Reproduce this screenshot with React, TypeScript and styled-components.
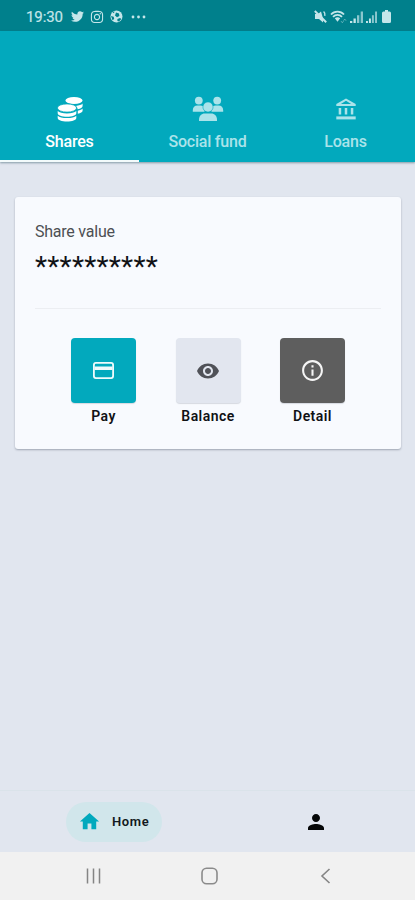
import React from "react";
import styled, { createGlobalStyle } from "styled-components";
import { FaTwitter, FaInstagram } from "react-icons/fa";
import { MdHome, MdPerson, MdRemoveRedEye, MdInfoOutline } from "react-icons/md";

const GlobalStyle = createGlobalStyle`
  * { box-sizing: border-box; }
  body { margin: 0; background: #e1e6ef; font-family: Roboto, sans-serif; }
  button { font-family: inherit; border: 0; padding: 0; background: none; }
  svg { display: block; flex: none; }
`;

const Screen = styled.div`
  width: 415px;
  height: 900px;
  display: flex;
  flex-direction: column;
  overflow: hidden;
  background: #e1e6ef;
`;

const StatusBar = styled.header`
  height: 31px;
  flex: none;
  display: flex;
  align-items: center;
  justify-content: space-between;
  padding: 2px 24px 0 26px;
  background: #00808c;
  color: #c5e6ea;
`;

const StatusGroup = styled.div<{ $gap: number }>`
  display: flex;
  align-items: center;
  gap: ${(p) => p.$gap}px;
`;

const Clock = styled.span`
  width: 39px;
  font-size: 15px;
  line-height: 18px;
  letter-spacing: -0.1px;
  -webkit-text-stroke: 0.2px currentColor;
`;

const Overflow = styled.span`
  margin-left: 2px;
`;

const BatteryLevel = styled.span`
  margin-left: 2px;
`;

const Tabs = styled.nav`
  height: 131px;
  flex: none;
  display: grid;
  grid-template-columns: 139px 137px 139px;
  background: #02a9bd;
  box-shadow: 0 1px 2px rgba(40, 80, 95, 0.5);
`;

const Tab = styled.button<{ $active?: boolean }>`
  display: flex;
  flex-direction: column;
  align-items: center;
  justify-content: flex-end;
  padding-bottom: ${(p) => (p.$active ? 8 : 10)}px;
  border-bottom: ${(p) => (p.$active ? "2px solid #f3fbfc" : "0")};
  color: ${(p) => (p.$active ? "#ffffff" : "#abe3ea")};
`;

const TabIcon = styled.span`
  height: 28px;
  margin-bottom: 9px;
  display: flex;
  align-items: center;
  justify-content: center;
`;

const TabLabel = styled.span<{ $spacing: number }>`
  font-size: 16px;
  line-height: 20px;
  font-weight: 500;
  letter-spacing: ${(p) => p.$spacing}px;
  white-space: nowrap;
`;

const Content = styled.main`
  flex: 1;
  padding: 35px 14px 0 15px;
`;

const Card = styled.section`
  height: 252px;
  padding: 25px 20px 0;
  border-radius: 3px;
  background: #f8fafe;
  box-shadow: 0 1px 2px rgba(60, 70, 90, 0.4);
`;

const CardLabel = styled.div`
  font-size: 16px;
  line-height: 20px;
  letter-spacing: -0.23px;
  color: #4d4f53;
`;

const MaskedValue = styled.div`
  height: 67px;
  padding-top: 9px;
  font-size: 28px;
  line-height: 32px;
  letter-spacing: 0.24px;
  color: #101216;
  border-bottom: 1px solid #eceef2;
`;

const Actions = styled.div`
  display: flex;
  justify-content: space-between;
  padding: 29px 36px 0;
`;

const Action = styled.div`
  width: 65px;
  display: flex;
  flex-direction: column;
  align-items: center;
`;

const Tile = styled.button<{ $bg: string; $color: string }>`
  width: 65px;
  height: 65px;
  display: flex;
  align-items: center;
  justify-content: center;
  border-radius: 4px;
  background: ${(p) => p.$bg};
  color: ${(p) => p.$color};
  box-shadow: 0 1px 1px rgba(60, 70, 90, 0.18);
`;

const ActionLabel = styled.span`
  margin-top: 4px;
  font-size: 14px;
  line-height: 18px;
  font-weight: 600;
  letter-spacing: 0.45px;
  color: #101115;
`;

const BottomNav = styled.nav`
  height: 62px;
  flex: none;
  display: flex;
  align-items: center;
  padding-left: 66px;
  border-top: 1px solid #dae3ea;
`;

const HomePill = styled.button`
  width: 96px;
  height: 40px;
  display: flex;
  align-items: center;
  gap: 11px;
  padding-left: 12px;
  border-radius: 20px;
  background: #d1e6eb;
  color: #02a9bd;
`;

const PillLabel = styled.span`
  font-size: 13px;
  font-weight: 600;
  letter-spacing: 0.6px;
  color: #111820;
`;

const ProfileButton = styled.button`
  margin-left: 142px;
  color: #050708;
`;

const SystemBar = styled.footer`
  height: 48px;
  flex: none;
  display: flex;
  align-items: center;
  gap: 99px;
  padding-left: 85px;
  background: #f1f1f1;
`;

const Ball = () => (
  <svg width="13" height="13" viewBox="0 0 13 13" fill="currentColor">
    <circle cx="6.500" cy="6.500" r="6" />
    <path d="M6 2.600 9 3.400 9.400 6 7 7.200 5 5.400zM1 6 3.700 6.700 4.200 9 2.500 10.300zM7.400 9 10 8l1.400 1L9 11.400 7.400 11zM2.500 2.500 4.500 1.200 4 3.300z" fill="#00808c" />
  </svg>
);

const Dots = () => (
  <svg width="15" height="4" viewBox="0 0 15 4" fill="currentColor">
    <circle cx="2" cy="2" r="1.400" /><circle cx="7.500" cy="2" r="1.400" /><circle cx="13" cy="2" r="1.400" />
  </svg>
);

const Muted = () => (
  <svg width="13" height="13" viewBox="0 0 13 13" fill="currentColor">
    <path d="M1 4h3l3-2.500 2 7V12.600L5 9H1z" />
    <path d="M.8 1 12.200 12.200" fill="none" stroke="currentColor" strokeWidth="2" />
    <path d="M9.600 1.500c1.200 1 1.600 2.600 1.200 4.300" fill="none" stroke="currentColor" strokeWidth="1.400" />
  </svg>
);

const Wifi = () => (
  <svg width="17" height="14" viewBox="0 0 17 14" fill="none" stroke="currentColor">
    <path d="M1 4.500C4.500.700 10.500.700 14 4.500M3 6.800c2.500-2.600 6.500-2.600 9 0" strokeWidth="1.800" />
    <path d="M4.800 8.300 7.500 11.800l2.700-3.500c-1.500-1.400-3.900-1.400-5.400 0z" fill="currentColor" stroke="none" />
    <path d="m11 11 1.300 1.800 1.300-1.800M13.500 10.800 14.800 9l1.300 1.800" strokeWidth=".8" opacity=".5" />
  </svg>
);

const Signal = ({ width }: { width: number }) => (
  <svg width={width} height="12" viewBox="0 0 13 12" preserveAspectRatio="none" fill="currentColor">
    <path d="M0 10h2.300v2H0zM3.500 7.500h2.300V12H3.500z" />
    <path d="M7 4.200h2.300V12H7zM10.700.500H13V12h-2.300z" opacity=".7" />
  </svg>
);

const Battery = () => (
  <svg width="9" height="13" viewBox="0 0 9 13" fill="currentColor">
    <path d="M3 0h3v1.500h1.500Q9 1.500 9 3v8.500Q9 13 7.500 13h-6Q0 13 0 11.500V3q0-1.500 1.500-1.500H3z" />
  </svg>
);

const Coins = () => (
  <svg width="26" height="26" viewBox="0 0 26 26" fill="currentColor">
    <ellipse cx="17" cy="4.500" rx="8.600" ry="3.500" />
    <path d="M18.800 9.900c3.200-.2 5.700-1 6.800-2.300v2.500c0 1.500-2 2.700-4.900 3.200-.100-1.300-.7-2.500-1.900-3.400zM20.800 14.700c2.300-.4 4-1.200 4.800-2.200v2.300c0 1.400-2 2.500-4.800 3z" />
    <ellipse cx="10" cy="12" rx="9.600" ry="4.100" stroke="#02a9bd" strokeWidth=".8" />
    <path d="M.7 15c1.500 1.600 5 2.500 9.300 2.500s7.800-.9 9.300-2.500v2.300c0 2-4.100 3.500-9.300 3.500S.7 19.300.7 17.300zM.7 19.800c1.500 1.500 5 2.300 9.300 2.300s7.800-.8 9.300-2.300V22c0 2-4.100 3.500-9.300 3.500S.7 24 .7 22z" />
  </svg>
);

const People = () => (
  <svg width="32" height="26" viewBox="0 0 32 26" fill="currentColor">
    <circle cx="6.800" cy="4.600" r="3.900" /><circle cx="25.200" cy="4.600" r="3.900" />
    <path d="M.8 15.800v-1.500c0-2.900 1.800-4.800 4.600-4.800h3c1.900 0 3.400.8 4.100 2.300v4zM31.200 15.800v-1.500c0-2.900-1.800-4.800-4.600-4.800h-3c-1.900 0-3.400.8-4.100 2.300v4z" />
    <circle cx="16" cy="11" r="5.100" stroke="#02a9bd" strokeWidth=".6" />
    <path d="M7 25.100v-1.500c0-3.800 2.400-6.200 5.800-6.200h6.400c3.400 0 5.800 2.400 5.800 6.200v1.500z" />
  </svg>
);

const Bank = () => (
  <svg width="20" height="22" viewBox="0 0 20 22" fill="currentColor">
    <path fillRule="evenodd" d="M10 .5 19.700 6v2H.3V6zM10 2.800 4.900 5.900h10.200z" />
    <path d="M2.700 9.900h2.500v6.700H2.700zM8.750 9.900h2.500v6.700h-2.500zM14.800 9.900h2.500v6.700h-2.500z" />
    <path d="M.3 18.400h19.400v3H.3z" />
  </svg>
);

const CardGlyph = () => (
  <svg width="21" height="17" viewBox="0 0 21 17">
    <rect x=".9" y=".9" width="19.200" height="15.200" rx="2" fill="none" stroke="currentColor" strokeWidth="1.800" />
    <path d="M1.500 4.500h18V8h-18z" fill="currentColor" />
  </svg>
);

const RecentsIcon = () => (
  <svg width="17" height="16" viewBox="0 0 17 16" fill="none" stroke="#858585" strokeWidth="1.500">
    <path d="M2.500.5v15M8.500.5v15M14.500.5v15" />
  </svg>
);

const SystemHomeIcon = () => (
  <svg width="17" height="18" viewBox="0 0 17 18" fill="none" stroke="#8b8b8b" strokeWidth="1.600">
    <rect x="1" y="1.200" width="15" height="15.600" rx="4.600" />
  </svg>
);

const BackIcon = () => (
  <svg width="17" height="16" viewBox="0 0 17 16" fill="none" stroke="#858585" strokeWidth="1.600">
    <path d="M12.500 1 5 8l7.500 7" />
  </svg>
);

export default function App() {
  return (
    <>
      <GlobalStyle />
      <Screen>
        <StatusBar>
          <StatusGroup $gap={6}>
            <Clock>19:30</Clock>
            <FaTwitter size={13} />
            <FaInstagram size={14} />
            <Ball />
            <Overflow><Dots /></Overflow>
          </StatusGroup>
          <StatusGroup $gap={3}>
            <Muted />
            <Wifi />
            <Signal width={13} />
            <Signal width={11} />
            <BatteryLevel><Battery /></BatteryLevel>
          </StatusGroup>
        </StatusBar>
        <Tabs>
          <Tab $active>
            <TabIcon><Coins /></TabIcon>
            <TabLabel $spacing={-0.2}>Shares</TabLabel>
          </Tab>
          <Tab>
            <TabIcon><People /></TabIcon>
            <TabLabel $spacing={-0.22}>Social fund</TabLabel>
          </Tab>
          <Tab>
            <TabIcon><Bank /></TabIcon>
            <TabLabel $spacing={-0.2}>Loans</TabLabel>
          </Tab>
        </Tabs>
        <Content>
          <Card>
            <CardLabel>Share value</CardLabel>
            <MaskedValue>**********</MaskedValue>
            <Actions>
              <Action>
                <Tile $bg="#02a9bd" $color="#eefbfc"><CardGlyph /></Tile>
                <ActionLabel>Pay</ActionLabel>
              </Action>
              <Action>
                <Tile $bg="#e2e6ef" $color="#505258"><MdRemoveRedEye size={24} /></Tile>
                <ActionLabel>Balance</ActionLabel>
              </Action>
              <Action>
                <Tile $bg="#5e5e5e" $color="#f5f5f5"><MdInfoOutline size={25} /></Tile>
                <ActionLabel>Detail</ActionLabel>
              </Action>
            </Actions>
          </Card>
        </Content>
        <BottomNav>
          <HomePill>
            <MdHome size={23} />
            <PillLabel>Home</PillLabel>
          </HomePill>
          <ProfileButton aria-label="Profile"><MdPerson size={24} /></ProfileButton>
        </BottomNav>
        <SystemBar>
          <RecentsIcon />
          <SystemHomeIcon />
          <BackIcon />
        </SystemBar>
      </Screen>
    </>
  );
}
